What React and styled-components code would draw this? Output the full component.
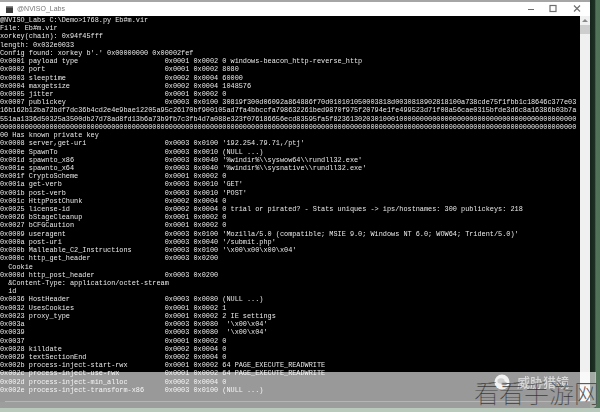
import React from "react";
import styled, { createGlobalStyle } from "styled-components";

const Global = createGlobalStyle`
  html, body { margin: 0; padding: 0; background: #b9c9bb; }
`;

const Page = styled.div`
  position: relative;
  width: 600px;
  height: 412px;
  overflow: hidden;
  display: flex;
  align-items: flex-start;
  background: #b9c9bb;
`;

const Main = styled.div`
  width: 590px;
  height: 408px;
  box-sizing: border-box;
  border-bottom: 6px solid #0c0c0c;
  display: flex;
  flex-direction: column;
  background: #f0f0f0;
`;

const Edge = styled.div`
  flex: 1;
  height: 408px;
  background: linear-gradient(90deg, #16241a 0, #1d3023 45%, #52755a 60%, #4f7356 100%);
`;

const TitleBar = styled.div`
  height: 14px;
  border-top: 2px solid #a6a6a6;
  background: #fff;
  display: flex;
  align-items: center;
  padding-left: 6px;
  gap: 4px;
  filter: blur(0.4px);
`;

const TitleText = styled.span`
  font: 7px/14px "Liberation Sans", Arial, sans-serif;
  color: #777;
  flex: 1;
`;

const WinControls = styled.div`
  display: flex;
  align-items: center;
  width: 63px;
  height: 14px;
`;

const Body = styled.div`
  flex: 1;
  min-height: 0;
  display: flex;
`;

const Terminal = styled.pre`
  flex: 1;
  margin: 0;
  overflow: hidden;
  background: #000;
  color: #e8e8e8;
  font-family: "Liberation Mono", "DejaVu Sans Mono", monospace;
  font-size: 6.87px;
  line-height: 8.22px;
  filter: blur(0.4px);
`;

const Scrollbar = styled.div`
  width: 10px;
  background: #f0f0f0;
  display: flex;
  flex-direction: column;
  align-items: center;
`;

const ScrollArrow = styled.div`
  margin-top: 3px;
  width: 0;
  height: 0;
  border-left: 3px solid transparent;
  border-right: 3px solid transparent;
  border-bottom: 3px solid #8a8a8a;
`;

const ScrollThumb = styled.div`
  margin-top: 3px;
  width: 100%;
  height: 9px;
  background: #cdcdcd;
`;

const Band = styled.div`
  position: absolute;
  left: 0;
  top: 372px;
  width: 596px;
  height: 36px;
  background: rgba(255, 255, 255, 0.6);
  border-bottom-right-radius: 3px;
`;

const BandLine = styled.div`
  position: absolute;
  left: 5px;
  right: 0;
  top: 29px;
  height: 1px;
  background: #b5b5b5;
`;

const Watermark = styled.div`
  position: absolute;
  left: 474px;
  top: 373px;
  font: 100 25px/38px "Noto Sans CJK SC", sans-serif;
  color: #151515;
  -webkit-text-stroke: 0.25px #9a9a9a;
  white-space: nowrap;
`;

const BrandMark = styled.div`
  position: absolute;
  left: 494px;
  top: 374px;
  display: flex;
  align-items: center;
  gap: 7px;
  font: 500 13px/16px "Noto Sans CJK SC", sans-serif;
  color: #d8d8d8;
  filter: blur(0.5px);
`;

const pad = (name) => name.padEnd(33, " ");
const rows = [
  ["0x0001", "payload type", "0x0001 0x0002 0 windows-beacon_http-reverse_http"],
  ["0x0002", "port", "0x0001 0x0002 8080"],
  ["0x0003", "sleeptime", "0x0002 0x0004 60000"],
  ["0x0004", "maxgetsize", "0x0002 0x0004 1048576"],
  ["0x0005", "jitter", "0x0001 0x0002 0"],
  ["0x0007", "publickey", "0x0003 0x0100 30819f300d06092a864886f70d010101050003818d0030818902818100a738cde75f1fbb1c18646c377e030"],
];
const rows2 = [
  ["0x0008", "server,get-uri", "0x0003 0x0100 '192.254.79.71,/ptj'"],
  ["0x000e", "SpawnTo", "0x0003 0x0010 (NULL ...)"],
  ["0x001d", "spawnto_x86", "0x0003 0x0040 '%windir%\\\\syswow64\\\\rundll32.exe'"],
  ["0x001e", "spawnto_x64", "0x0003 0x0040 '%windir%\\\\sysnative\\\\rundll32.exe'"],
  ["0x001f", "CryptoScheme", "0x0001 0x0002 0"],
  ["0x001a", "get-verb", "0x0003 0x0010 'GET'"],
  ["0x001b", "post-verb", "0x0003 0x0010 'POST'"],
  ["0x001c", "HttpPostChunk", "0x0002 0x0004 0"],
  ["0x0025", "license-id", "0x0002 0x0004 0 trial or pirated? - Stats uniques -> ips/hostnames: 300 publickeys: 218"],
  ["0x0026", "bStageCleanup", "0x0001 0x0002 0"],
  ["0x0027", "bCFGCaution", "0x0001 0x0002 0"],
  ["0x0009", "useragent", "0x0003 0x0100 'Mozilla/5.0 (compatible; MSIE 9.0; Windows NT 6.0; WOW64; Trident/5.0)'"],
  ["0x000a", "post-uri", "0x0003 0x0040 '/submit.php'"],
  ["0x000b", "Malleable_C2_Instructions", "0x0003 0x0100 '\\x00\\x00\\x00\\x04'"],
  ["0x000c", "http_get_header", "0x0003 0x0200"],
];
const rows3 = [
  ["0x000d", "http_post_header", "0x0003 0x0200"],
];
const rows4 = [
  ["0x0036", "HostHeader", "0x0003 0x0080 (NULL ...)"],
  ["0x0032", "UsesCookies", "0x0001 0x0002 1"],
  ["0x0023", "proxy_type", "0x0001 0x0002 2 IE settings"],
  ["0x003a", "", "0x0003 0x0080  '\\x00\\x04'"],
  ["0x0039", "", "0x0003 0x0080  '\\x00\\x04'"],
  ["0x0037", "", "0x0001 0x0002 0"],
  ["0x0028", "killdate", "0x0002 0x0004 0"],
  ["0x0029", "textSectionEnd", "0x0002 0x0004 0"],
  ["0x002b", "process-inject-start-rwx", "0x0001 0x0002 64 PAGE_EXECUTE_READWRITE"],
  ["0x002c", "process-inject-use-rwx", "0x0001 0x0002 64 PAGE_EXECUTE_READWRITE"],
  ["0x002d", "process-inject-min_alloc", "0x0002 0x0004 0"],
  ["0x002e", "process-inject-transform-x86", "0x0003 0x0100 (NULL ...)"],
];
const fmt = (list) => list.map(([id, name, val]) => `${id} ${pad(name)}${val}`);

const lines = [
  "@NVISO_Labs C:\\Demo>1768.py Eb#m.vir",
  "File: Eb#m.vir",
  "xorkey(chain): 0x94f45fff",
  "length: 0x032e0033",
  "Config found: xorkey b'.' 0x00000000 0x00002fef",
  ...fmt(rows),
  "16b162b12ba72bdf7dc36b4cd2e4e9bae12205a95c26170bf900105ad7fa4bbccfa798632261bed9870f975f20794e1fe499523d71f08a56cae0315bfde3d6c8a16386b03b7a6",
  "551aa1336d50325a3500db27d78ad8fd13b6a73b9fb7c3fb4d7a088e323f076186656ecd83595fa5f8236130203010001" + "0".repeat(50),
  "0".repeat(140),
  "00 Has known private key",
  ...fmt(rows2),
  "  Cookie",
  ...fmt(rows3),
  "  &Content-Type: application/octet-stream",
  "  id",
  ...fmt(rows4),
].map((l) => l.slice(0, 140));

const WindowIcons = () => (
  <svg width="63" height="14" viewBox="0 0 63 14" fill="none" stroke="#6e6e6e">
    <path d="M1 7.5H7" strokeWidth="1" />
    <rect x="23" y="3.5" width="6" height="6" strokeWidth="1.2" />
    <path d="M47 3.5L53 9.5M53 3.5L47 9.5" strokeWidth="1.2" />
  </svg>
);

const ConsoleIcon = () => (
  <svg width="7" height="7" viewBox="0 0 7 7">
    <rect width="7" height="7" fill="#3a3a3a" />
    <rect width="7" height="1.5" fill="#8a8a8a" />
  </svg>
);

const ChatIcon = () => (
  <svg width="16" height="16" viewBox="0 0 16 16">
    <circle cx="8" cy="8" r="7.5" fill="#f2f2f2" />
    <ellipse cx="7" cy="7" rx="3.6" ry="2.8" fill="#cfcfcf" />
    <ellipse cx="10" cy="9.5" rx="2.8" ry="2.1" fill="#bcbcbc" />
  </svg>
);

export default function App() {
  return (
    <Page>
      <Global />
      <Main>
        <TitleBar>
          <ConsoleIcon />
          <TitleText>@NVISO_Labs</TitleText>
          <WinControls>
            <WindowIcons />
          </WinControls>
        </TitleBar>
        <Body>
          <Terminal>{lines.join("\n")}</Terminal>
          <Scrollbar>
            <ScrollArrow />
            <ScrollThumb />
          </Scrollbar>
        </Body>
      </Main>
      <Edge />
      <Band>
        <BandLine />
      </Band>
      <BrandMark>
        <ChatIcon />
        威胁猎镜
      </BrandMark>
      <Watermark>看看手游网</Watermark>
    </Page>
  );
}
